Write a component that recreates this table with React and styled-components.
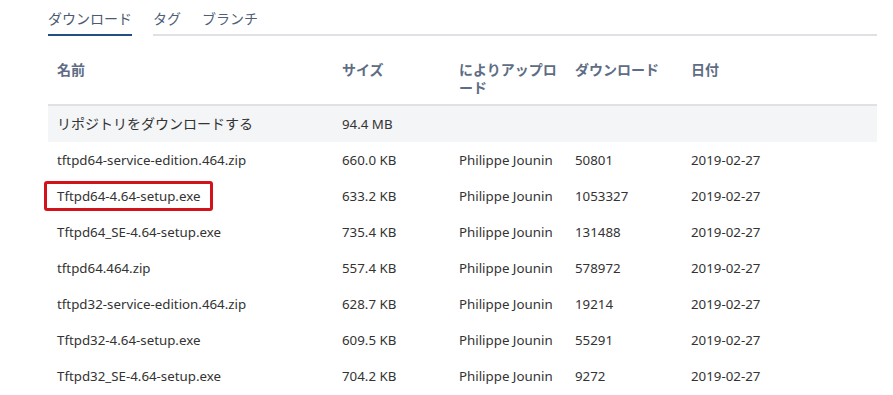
import React from 'react'
import styled, { createGlobalStyle } from 'styled-components'

const Global = createGlobalStyle`
  body {
    margin: 0;
    background: #fff;
    font-family: "Segoe UI", "Noto Sans", "Noto Sans CJK JP", sans-serif;
  }
`

const rows = [
  { name: 'tftpd64-service-edition.464.zip', size: '660.0 KB', count: '50801' },
  { name: 'Tftpd64-4.64-setup.exe', size: '633.2 KB', count: '1053327', marked: true },
  { name: 'Tftpd64_SE-4.64-setup.exe', size: '735.4 KB', count: '131488' },
  { name: 'tftpd64.464.zip', size: '557.4 KB', count: '578972' },
  { name: 'tftpd32-service-edition.464.zip', size: '628.7 KB', count: '19214' },
  { name: 'Tftpd32-4.64-setup.exe', size: '609.5 KB', count: '55291' },
  { name: 'Tftpd32_SE-4.64-setup.exe', size: '704.2 KB', count: '9272' },
]

const App = () => {
  return (
    <>
      <Global />
      <Page>
        <Tabs>
          <Tab active>ダウンロード</Tab>
          <Tab>タグ</Tab>
          <Tab>ブランチ</Tab>
          <TabRest />
        </Tabs>
        <Table>
          <colgroup>
            <col style={{ width: 285 }} />
            <col style={{ width: 117 }} />
            <col style={{ width: 116 }} />
            <col style={{ width: 116 }} />
            <col />
          </colgroup>
          <thead>
            <tr>
              <Th>名前</Th>
              <Th>サイズ</Th>
              <Th>によりアップロード</Th>
              <Th>ダウンロード</Th>
              <Th>日付</Th>
            </tr>
          </thead>
          <tbody>
            <Row shaded>
              <Td jp>リポジトリをダウンロードする</Td>
              <Td>94.4 MB</Td>
              <Td />
              <Td />
              <Td />
            </Row>
            {rows.map((r) => (
              <Row key={r.name}>
                <Td>
                  <FileName marked={r.marked}>{r.name}</FileName>
                </Td>
                <Td>{r.size}</Td>
                <Td>Philippe Jounin</Td>
                <Td>{r.count}</Td>
                <Td>2019-02-27</Td>
              </Row>
            ))}
          </tbody>
        </Table>
      </Page>
    </>
  )
}

export default App

const Page = styled.div`
  width: 829px;
  padding: 9px 0 0 48px;
  font-size: 14px;
`

const Tabs = styled.div`
  display: flex;
  align-items: flex-end;
`

const Tab = styled.div`
  padding: 0 21px 5px 0;
  line-height: 20px;
  color: ${(p) => (p.active ? '#4a5a72' : '#505f79')};
  border-bottom: 2px solid #dfe1e5;
  &:first-child {
    padding-right: 0;
    margin-right: 21px;
    border-bottom-color: #205081;
  }
`

const TabRest = styled.div`
  flex: 1;
  border-bottom: 2px solid #dfe1e5;
`

const Table = styled.table`
  width: 829px;
  margin-top: 18px;
  border-collapse: collapse;
  table-layout: fixed;
`

const Th = styled.th`
  text-align: left;
  vertical-align: top;
  padding: 7px 9px 7px 9px;
  line-height: 18px;
  font-weight: 600;
  color: #5e6c84;
  border-bottom: 2px solid #dfe1e5;
`

const Row = styled.tr`
  background: ${(p) => (p.shaded ? '#f4f5f7' : '#fff')};
`

const Td = styled.td`
  height: 36px;
  padding: 0 9px;
  line-height: 18px;
  font-size: ${(p) => (p.jp ? '14px' : '13.3px')};
  color: #333;
  white-space: nowrap;
`

const FileName = styled.span`
  position: relative;
  &::after {
    content: '';
    display: ${(p) => (p.marked ? 'block' : 'none')};
    position: absolute;
    top: -6px;
    bottom: -6px;
    left: -13px;
    right: -13px;
    border: 3px solid #d3121b;
    border-radius: 3px;
  }
`
